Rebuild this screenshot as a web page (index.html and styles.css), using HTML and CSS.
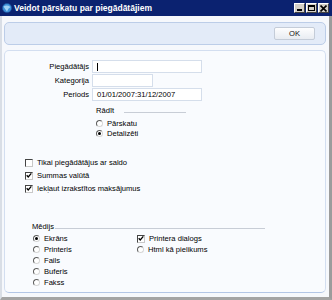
FILE: index.html
```html
<!DOCTYPE html>
<html>
<head>
    <link rel="stylesheet" href="styles.css">
    <title>Veidot pārskatu par piegādātājiem</title>
</head>
<body>
<div class="window">
    <div class="titlebar">
        <svg class="app-icon" width="10" height="10" viewBox="0 0 10 10">
            <circle cx="5" cy="5" r="4.6" fill="#3d8fd8"/>
            <path d="M1.5 3.5 Q5 1.5 8.5 4 Q6 5 5 8.5 Q3 6 1.5 3.5Z" fill="#9fd0f5"/>
            <circle cx="5" cy="5" r="4.6" fill="none" stroke="#1b4f9a" stroke-width="0.6"/>
        </svg>
        <span class="title">Veidot pārskatu par piegādātājiem</span>
        <div class="winbtns">
            <span class="wbtn"><span class="min"></span></span>
            <span class="wbtn"><span class="max"></span></span>
            <span class="wbtn"><svg width="7" height="7" viewBox="0 0 7 7"><path d="M0.5 0.5L6.5 6.5M6.5 0.5L0.5 6.5" stroke="#000" stroke-width="1.6"/></svg></span>
        </div>
    </div>

    <div class="toolbar">
        <button class="ok">OK</button>
    </div>

    <div class="panel">
        <div class="fields">
            <label>Piegādātājs</label>
            <span class="input wide"><span class="caret"></span></span>
            <label>Kategorija</label>
            <span class="input short"></span>
            <label>Periods</label>
            <span class="input wide">01/01/2007:31/12/2007</span>
        </div>

        <div class="group show">
            <div class="group-head"><span>Rādīt</span><span class="rule"></span></div>
            <div class="opt"><span class="radio"></span>Pārskatu</div>
            <div class="opt"><span class="radio on"></span>Detalizēti</div>
        </div>

        <div class="checks">
            <div class="opt"><span class="check"></span>Tikai piegādātājus ar saldo</div>
            <div class="opt"><span class="check on"><svg width="7" height="7" viewBox="0 0 7 7"><path d="M0.8 3.2L2.6 5.2L6.2 1" fill="none" stroke="#000" stroke-width="1.5"/></svg></span>Summas valūtā</div>
            <div class="opt"><span class="check on"><svg width="7" height="7" viewBox="0 0 7 7"><path d="M0.8 3.2L2.6 5.2L6.2 1" fill="none" stroke="#000" stroke-width="1.5"/></svg></span>Iekļaut izrakstītos maksājumus</div>
        </div>

        <div class="group media">
            <div class="group-head"><span>Mēdijs</span><span class="rule"></span></div>
            <div class="cols">
                <div class="col first">
                    <div class="opt"><span class="radio on"></span>Ekrāns</div>
                    <div class="opt"><span class="radio"></span>Printeris</div>
                    <div class="opt"><span class="radio"></span>Fails</div>
                    <div class="opt"><span class="radio"></span>Buferis</div>
                    <div class="opt"><span class="radio"></span>Fakss</div>
                </div>
                <div class="col">
                    <div class="opt"><span class="check on"><svg width="7" height="7" viewBox="0 0 7 7"><path d="M0.8 3.2L2.6 5.2L6.2 1" fill="none" stroke="#000" stroke-width="1.5"/></svg></span>Printera dialogs</div>
                    <div class="opt"><span class="radio"></span>Html kā pielikums</div>
                </div>
            </div>
        </div>
    </div>
</div>
</body>
</html>
```

FILE: styles.css
```css
body {
    margin: 0;
    background: #fff;
    font-family: "Liberation Sans", Arial, sans-serif;
    font-size: 7.6px;
    color: #000;
}

.window {
    width: 332px;
    height: 300px;
    box-sizing: border-box;
    background: #f6f8fc;
    border-left: 2px solid #d9dee6;
    border-right: 3px solid #9c9c9c;
    border-bottom: 3px solid #a4a4a4;
    display: flex;
    flex-direction: column;
}

/* title bar */
.titlebar {
    height: 16px;
    margin-left: -2px;
    margin-right: -3px;
    background: #0b2270;
    display: flex;
    align-items: center;
    padding-left: 2px;
}
.app-icon {
    display: block;
}
.title {
    color: #fff;
    font-weight: bold;
    font-size: 8.5px;
    margin-left: 2px;
    flex: 1;
}
.winbtns {
    display: flex;
    gap: 1px;
    margin-right: 3px;
}
.wbtn {
    width: 11px;
    height: 10px;
    box-sizing: border-box;
    background: #d4d0c8;
    border: 1px solid;
    border-color: #fff #404040 #404040 #fff;
    display: flex;
    align-items: center;
    justify-content: center;
}
.wbtn .min {
    width: 5px;
    height: 2px;
    background: #000;
    margin-top: 4px;
    margin-right: 1px;
}
.wbtn .max {
    width: 7px;
    height: 6px;
    box-sizing: border-box;
    border: 1px solid #000;
    border-top-width: 2px;
}

/* top buttons panel */
.toolbar {
    margin: 6px 3px 0 2px;
    height: 23px;
    box-sizing: border-box;
    background: #e3ebf8;
    border: 1px solid #bccde8;
    border-radius: 5px;
    display: flex;
    justify-content: flex-end;
    padding: 4px 10px 0 0;
}
.ok {
    width: 41px;
    height: 13px;
    padding: 0;
    font-family: inherit;
    font-size: 7.6px;
    color: #111;
    background: linear-gradient(#fdfdfe, #e8ecf2);
    border: 1px solid #c4ccd8;
    border-radius: 2px;
}

/* main panel */
.panel {
    margin: 5px 3px 0 2px;
    height: 243px;
    box-sizing: border-box;
    background: #f9fbfe;
    border: 1px solid #d3def0;
    border-bottom-color: #b3c6e6;
    border-radius: 5px;
}

.fields {
    display: grid;
    grid-template-columns: 84px auto;
    column-gap: 3px;
    row-gap: 1px;
    margin-top: 9px;
    justify-items: start;
}
.fields label {
    justify-self: end;
    align-self: center;
}
.input {
    height: 13px;
    box-sizing: border-box;
    background: #fff;
    border: 1px solid #d5deeb;
    padding-left: 4px;
    line-height: 11px;
    display: flex;
    align-items: center;
}
.input.wide {
    width: 110px;
}
.input.short {
    width: 61px;
}
.caret {
    width: 1px;
    height: 8px;
    background: #000;
}

.group-head {
    display: flex;
    align-items: flex-end;
    height: 10px;
}
.rule {
    height: 0;
    border-bottom: 1px solid #c8cdd6;
    margin-bottom: 2px;
}

.opt {
    display: flex;
    align-items: center;
    white-space: nowrap;
}

.radio {
    width: 7px;
    height: 7px;
    box-sizing: border-box;
    border-radius: 50%;
    background: #fff;
    border: 1px solid;
    border-color: #5d5d5d #d6d6d6 #d6d6d6 #5d5d5d;
    margin-right: 4px;
    display: flex;
    align-items: center;
    justify-content: center;
}
.radio.on::after {
    content: "";
    width: 3px;
    height: 3px;
    border-radius: 50%;
    background: #000;
}

.check {
    width: 8px;
    height: 8px;
    box-sizing: border-box;
    background: #fff;
    border: 1px solid;
    border-color: #444 #c8c8c8 #c8c8c8 #444;
    margin-right: 4px;
    display: flex;
    align-items: center;
    justify-content: center;
}
.check svg {
    display: block;
}

/* Rādīt */
.show {
    margin: 4px 0 0 91px;
    width: 90px;
}
.show .rule {
    width: 68px;
    margin-left: 10px;
}
.show .opt {
    height: 10px;
}
.show .group-head {
    margin-bottom: 3px;
}

/* check list */
.checks {
    margin: 18px 0 0 20px;
}
.checks .opt {
    height: 13px;
}

/* Mēdijs */
.media {
    margin: 26px 0 0 27px;
}
.media .rule {
    width: 210px;
    margin-left: 1px;
}
.media .group-head {
    margin-bottom: 2px;
}
.cols {
    display: flex;
    padding-left: 1px;
}
.col.first {
    width: 104px;
}
.media .opt {
    height: 11px;
}
```
